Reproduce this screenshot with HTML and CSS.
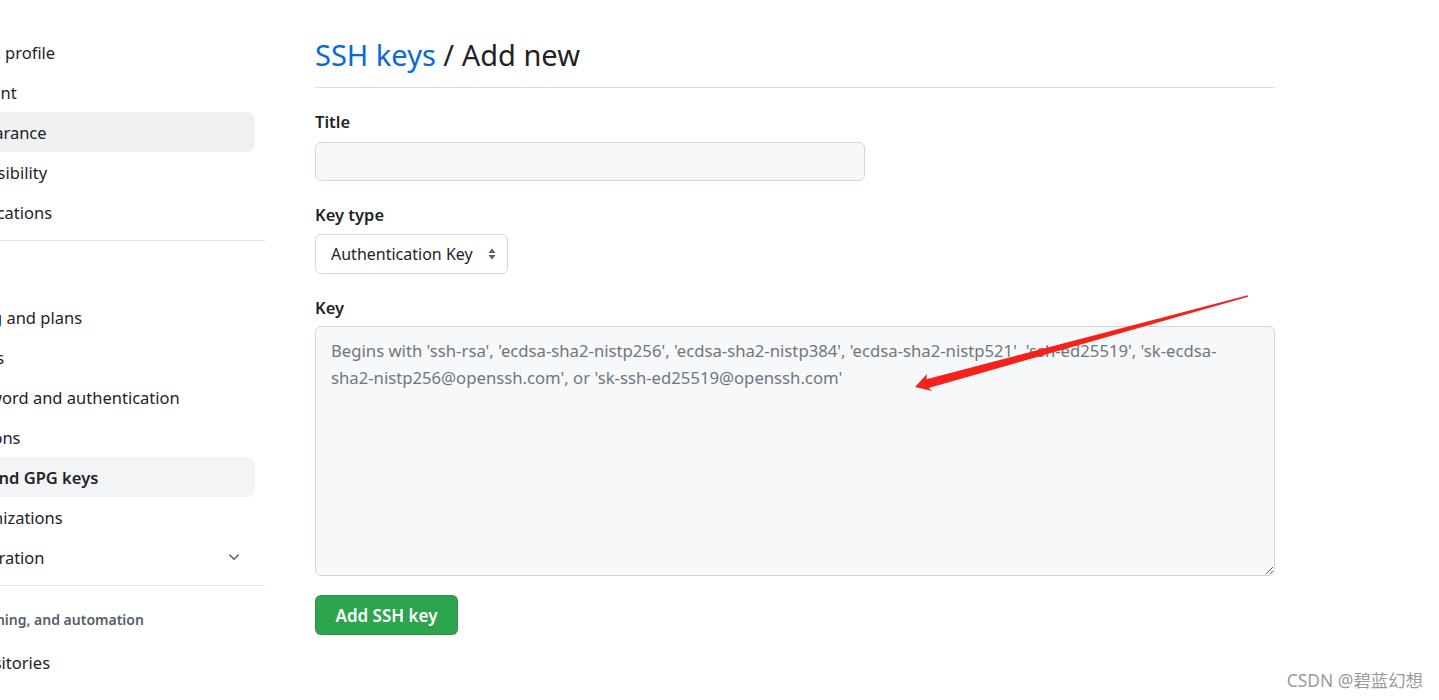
FILE: index.html
```html
<!DOCTYPE html>
<html lang="en">
<head>
<meta charset="utf-8">
<title>SSH keys / Add new</title>
<link rel="stylesheet" href="styles.css">
</head>
<body>
<div class="page">
  <nav class="sidebar">
    <div class="nav-inner">
      <a class="nav-item">Public profile</a>
      <a class="nav-item">Account</a>
      <a class="nav-item hover">Appearance</a>
      <a class="nav-item">Accessibility</a>
      <a class="nav-item">Notifications</a>
      <div class="nav-divider"></div>
      <div class="nav-heading access">Access</div>
      <a class="nav-item">Billing and plans</a>
      <a class="nav-item">Emails</a>
      <a class="nav-item">Password and authentication</a>
      <a class="nav-item">Sessions</a>
      <a class="nav-item selected">SSH and GPG keys</a>
      <a class="nav-item">Organizations</a>
      <a class="nav-item expand"><span>Moderation</span>
        <svg class="chev" width="16" height="16" viewBox="0 0 16 16"><path d="M3.8 6 L8 10.2 L12.2 6"/></svg>
      </a>
      <div class="nav-divider"></div>
      <div class="nav-heading">Code, planning, and automation</div>
      <a class="nav-item">Repositories</a>
    </div>
  </nav>
  <main class="main">
    <h2 class="page-title"><a class="crumb">SSH keys</a> / Add new</h2>
    <form class="form">
      <div class="field f-title">
        <label class="label" for="title">Title</label>
        <input class="input title-input" id="title" type="text">
      </div>
      <div class="field f-type">
        <label class="label" for="type">Key type</label>
        <div class="select-wrap">
          <select class="select" id="type"><option>Authentication Key</option></select>
          <svg class="select-arrows" width="10" height="16" viewBox="0 0 10 16"><path d="M5 2.5 L8.5 7 H1.5 Z M5 13.5 L1.5 9 H8.5 Z"/></svg>
        </div>
      </div>
      <div class="field f-key">
        <label class="label" for="key">Key</label>
        <textarea class="input key-input" id="key" placeholder="Begins with 'ssh-rsa', 'ecdsa-sha2-nistp256', 'ecdsa-sha2-nistp384', 'ecdsa-sha2-nistp521', 'ssh-ed25519', 'sk-ecdsa-&#10;sha2-nistp256@openssh.com', or 'sk-ssh-ed25519@openssh.com'"></textarea>
      </div>
      <button class="btn-primary" type="button">Add SSH key</button>
    </form>
  </main>
</div>
<svg class="annot" width="1439" height="700" viewBox="0 0 1439 700">
  <polygon fill="#f5221b" points="1247.8,295.2 926.4,379.2 927,374 915,387 932,391 928.7,387.9 1248.2,296.8"/>
</svg>
<div class="watermark">CSDN @碧蓝幻想</div>
</body>
</html>
```

FILE: styles.css
```css
html, body {
  margin: 0;
  padding: 0;
  background: #ffffff;
}
body {
  font-family: "Noto Sans", "Open Sans", sans-serif;
  color: #1f2328;
  font-size: 16.5px;
  width: 1439px;
  height: 700px;
  overflow: hidden;
  position: relative;
}
.page {
  display: flex;
  align-items: flex-start;
}
.sidebar {
  width: 265px;
  flex-shrink: 0;
  overflow: hidden;
  padding-top: 32px;
}
.nav-inner {
  margin-left: -78px;
  width: 343px;
  display: flex;
  flex-direction: column;
}
.nav-item {
  display: flex;
  align-items: center;
  justify-content: space-between;
  height: 40px;
  padding-left: 32px;
  padding-right: 13px;
  margin-right: 10px;
  border-radius: 8px;
  color: #1f2328;
  white-space: nowrap;
  box-sizing: border-box;
}
.nav-item.hover {
  background: #eff1f3;
}
.nav-item.selected {
  background: #f3f4f6;
  font-weight: 600;
}
.chev {
  fill: none;
  stroke: #57606a;
  stroke-width: 1.5;
  stroke-linecap: round;
  stroke-linejoin: round;
}
.nav-divider {
  height: 1px;
  background: #e5e8eb;
  margin: 8px 0 0 0;
}
.nav-heading {
  padding: 24px 0 12px 2px;
  line-height: 20px;
  font-size: 14px;
  font-weight: 600;
  color: #57606a;
  white-space: nowrap;
}
.nav-heading.access {
  padding-left: 0;
}
.main {
  margin-left: 50px;
  width: 960px;
  flex-shrink: 0;
}
.page-title {
  margin: 0;
  padding: 34px 0 11px;
  font-size: 29px;
  font-weight: 400;
  line-height: 42px;
  border-bottom: 1px solid #d8dee4;
  color: #1f2328;
}
.crumb {
  color: #0969da;
}
.form {
  display: flex;
  flex-direction: column;
  align-items: flex-start;
  padding-top: 23px;
}
.field {
  display: flex;
  flex-direction: column;
  align-items: flex-start;
  width: 100%;
}
.label {
  font-weight: 600;
  line-height: 22px;
}
.f-title {
  margin-bottom: 23px;
}
.f-title .label {
  margin-bottom: 9px;
}
.f-type {
  margin-bottom: 23px;
}
.f-type .label {
  margin-bottom: 8px;
}
.f-key {
  margin-bottom: 19px;
}
.f-key .label {
  margin-bottom: 7px;
}
.input {
  box-sizing: border-box;
  font-family: inherit;
  font-size: 16.5px;
  color: #1f2328;
  background: #f6f8fa;
  border: 1px solid #d0d7de;
  border-radius: 6px;
  outline: none;
}
.title-input {
  width: 550px;
  height: 39px;
}
.select-wrap {
  position: relative;
  width: 193px;
}
.select {
  appearance: none;
  -webkit-appearance: none;
  width: 193px;
  height: 40px;
  box-sizing: border-box;
  padding: 0 22px 0 15px;
  font-family: inherit;
  font-size: 16px;
  color: #1f2328;
  background: #ffffff;
  border: 1px solid #d0d7de;
  border-radius: 6px;
}
.select-arrows {
  position: absolute;
  right: 11px;
  top: 12px;
  fill: #57606a;
}
.key-input {
  width: 960px;
  height: 250px;
  padding: 10px 15px;
  font-size: 16.7px;
  line-height: 27px;
  resize: vertical;
}
.key-input::placeholder {
  color: #6e7781;
}
.btn-primary {
  height: 40px;
  width: 143px;
  background: #2da44e;
  color: #ffffff;
  border: 1px solid rgba(31, 35, 40, 0.15);
  border-radius: 6px;
  font-family: inherit;
  font-size: 17px;
  font-weight: 600;
  padding: 0;
}
.annot {
  position: absolute;
  left: 0;
  top: 0;
  pointer-events: none;
}
.watermark {
  position: absolute;
  right: 16px;
  bottom: 8px;
  font-size: 17.4px;
  color: #9a9a9a;
  font-family: "Noto Sans", "Noto Sans CJK SC", sans-serif;
}
```
